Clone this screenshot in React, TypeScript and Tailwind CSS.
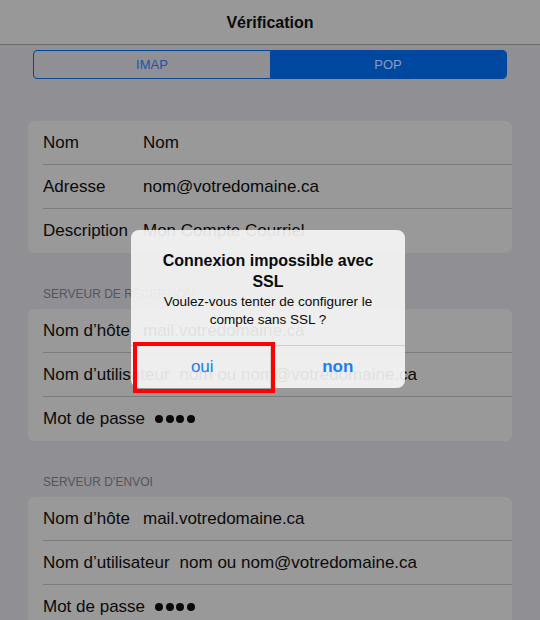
import React from 'react';

const font = { fontFamily: '"Liberation Sans", Arial, sans-serif' };

type Row = { label: string; value: string; dots?: boolean };

function Card({ rows }: { rows: Row[] }) {
  return (
    <div className="mx-[28px] rounded-[6px] bg-[#999999] pl-[15px]">
      {rows.map((r, i) => (
        <div
          key={i}
          className={`flex h-[44px] items-center text-[17px] text-[#0a0a0a] ${i < rows.length - 1 ? 'border-b border-[#7b7b7b]' : ''}`}
        >
          <span className="min-w-[100px] whitespace-nowrap pr-[10px]">{r.label}</span>
          {r.dots ? (
            <span className="flex gap-[2.5px]">
              <span className="h-[8px] w-[8px] rounded-full bg-[#0a0a0a]" />
              <span className="h-[8px] w-[8px] rounded-full bg-[#0a0a0a]" />
              <span className="h-[8px] w-[8px] rounded-full bg-[#0a0a0a]" />
              <span className="h-[8px] w-[8px] rounded-full bg-[#0a0a0a]" />
            </span>
          ) : (
            <span className="whitespace-nowrap">{r.value}</span>
          )}
        </div>
      ))}
    </div>
  );
}

function SectionTitle({ children }: { children: React.ReactNode }) {
  return (
    <div className="px-[43px] pb-[8px] pt-[34px] text-[12px] uppercase leading-[14px] text-[#55555a]">
      {children}
    </div>
  );
}

export default function App() {
  return (
    <div style={font} className="relative h-[620px] w-[540px] overflow-hidden bg-[#8f8f94]">
      {/* nav bar */}
      <div className="flex h-[45px] items-center justify-center border-b border-[#6e6e6e] bg-[#989898] pt-[2px]">
        <span className="text-[16px] font-bold text-[#0a0a0a]">Vérification</span>
      </div>

      {/* segmented control */}
      <div className="px-[33px] pt-[5px]">
        <div className="flex h-[29px] overflow-hidden rounded-[4px] border border-[#0047a0] text-[13px]">
          <div className="flex flex-1 items-center justify-center text-[#1d55a6]">IMAP</div>
          <div className="flex flex-1 items-center justify-center bg-[#0047a0] text-[#8a9cc0]">POP</div>
        </div>
      </div>

      <div className="pt-[42px]">
        <Card
          rows={[
            { label: 'Nom', value: 'Nom' },
            { label: 'Adresse', value: 'nom@votredomaine.ca' },
            { label: 'Description', value: 'Mon Compte Courriel' },
          ]}
        />
        <SectionTitle>Serveur de réception</SectionTitle>
        <Card
          rows={[
            { label: 'Nom d’hôte', value: 'mail.votredomaine.ca' },
            { label: 'Nom d’utilisateur', value: 'nom ou nom@votredomaine.ca' },
            { label: 'Mot de passe', value: '', dots: true },
          ]}
        />
        <SectionTitle>Serveur d’envoi</SectionTitle>
        <Card
          rows={[
            { label: 'Nom d’hôte', value: 'mail.votredomaine.ca' },
            { label: 'Nom d’utilisateur', value: 'nom ou nom@votredomaine.ca' },
            { label: 'Mot de passe', value: '', dots: true },
          ]}
        />
      </div>

      {/* alert */}
      <div className="absolute left-[131px] top-[230px] w-[274px] overflow-hidden rounded-[8px] bg-[#f7f7f7]/90">
        <div className="px-[16px] pb-[16px] pt-[20px] text-center">
          <div className="text-[16px] font-bold leading-[21px] text-[#0a0a0a]">
            Connexion impossible avec SSL
          </div>
          <div className="mt-[1px] text-[13.5px] leading-[18px] text-[#0a0a0a]">
            Voulez-vous tenter de configurer le compte sans SSL ?
          </div>
        </div>
        <div className="flex h-[43px] border-t border-[#cfcfcf] text-[17px] text-[#157efb]">
          <div className="flex flex-1 items-center justify-center border-r border-[#cfcfcf] pl-[4px]">oui</div>
          <div className="flex flex-1 items-center justify-center font-bold">non</div>
        </div>
      </div>

      {/* annotation */}
      <div className="absolute left-[133px] top-[342px] h-[51px] w-[142px] border-[4px] border-[#ff0000]" />
    </div>
  );
}
